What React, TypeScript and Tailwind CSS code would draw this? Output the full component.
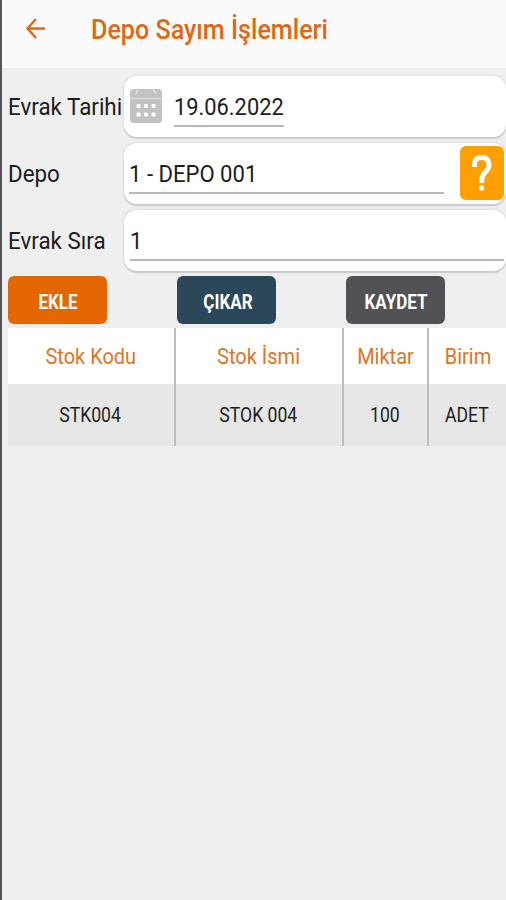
import type { ReactNode } from "react";

const columns = [
  { title: "Stok Kodu", value: "STK004" },
  { title: "Stok İsmi", value: "STOK 004" },
  { title: "Miktar", value: "100" },
  { title: "Birim", value: "ADET" },
];

const actions = [
  { label: "EKLE", color: "bg-[#e36600]" },
  { label: "ÇIKAR", color: "bg-[#2b4759]" },
  { label: "KAYDET", color: "bg-[#515255]" },
];

function Field({ label, children }: { label: string; children: ReactNode }) {
  return (
    <div className="flex h-[61px]">
      <div className="flex w-[116px] shrink-0 items-center">
        <span className="origin-left scale-x-[0.932] text-2xl whitespace-nowrap">{label}</span>
      </div>
      <div className="flex min-w-0 flex-1 rounded-[13px] bg-white shadow-[0_2px_1px_#cbcbcb,0_0_3px_#cdcdcd]">
        {children}
      </div>
    </div>
  );
}

function CalendarIcon() {
  return (
    <svg width="32" height="34" viewBox="0 0 32 34">
      <rect width="32" height="34" rx="4" fill="#c2c2c2" />
      <path d="M0 9.5h32" stroke="#dadada" strokeWidth="1.5" />
      <path d="M7.5 1.5L6.5 4M24 1.5L25.5 4" stroke="#e4e4e4" strokeWidth="1.8" strokeLinecap="round" />
      <g fill="#fff">
        <rect x="6.5" y="15" width="4" height="4" rx="1" />
        <rect x="14" y="15" width="4" height="4" rx="1" />
        <rect x="21.5" y="15" width="4" height="4" rx="1" />
        <rect x="6.5" y="23.5" width="4" height="4" rx="1" />
        <rect x="14" y="23.5" width="4" height="4" rx="1" />
        <rect x="21.5" y="23.5" width="4" height="4" rx="1" />
      </g>
    </svg>
  );
}

export default function App() {
  return (
    <div className="h-[900px] w-[506px] overflow-hidden border-l-2 border-[#565658] bg-[#efefef] font-['Roboto',sans-serif] text-[#1c1c1c]">
      <header className="flex h-[68px] items-start bg-[#fafafa] text-[#dd6916]">
        <button className="mt-[18px] ml-[23px]">
          <svg width="21" height="22" viewBox="0 0 21 22" fill="none" stroke="currentColor" strokeWidth="2.4">
            <path d="M20 10.5H2.5M11 1L2.5 10.5L11 20" />
          </svg>
        </button>
        <h1 className="mt-[10px] ml-[45px] origin-left scale-x-[0.93] text-[27px] leading-10 font-medium whitespace-nowrap">
          Depo Sayım İşlemleri
        </h1>
      </header>

      <main className="pt-2 pl-1.5">
        <div className="flex flex-col gap-1.5">
          <Field label="Evrak Tarihi">
            <div className="mt-[13px] ml-1.5">
              <CalendarIcon />
            </div>
            <div className="mt-[11px] ml-3 h-10 w-[110px] border-b-2 border-[#b9b9b9] text-2xl leading-10">
              <span className="block origin-left scale-x-[0.91]">19.06.2022</span>
            </div>
          </Field>
          <Field label="Depo">
            <div className="mt-[11px] ml-[5px] h-10 w-[315px] border-b-2 border-[#b9b9b9] text-2xl leading-10">
              <span className="block origin-left scale-x-[0.92]">1 - DEPO 001</span>
            </div>
            <button className="mt-[3px] ml-4 flex h-[54px] w-[44px] items-center justify-center rounded-md bg-[#ffa000]">
              <svg width="20" height="36" viewBox="0 0 20 36" fill="none" stroke="#fff">
                <path d="M2.5 12V9Q2.5 2.5 9.5 2.5Q17 2.5 17 9.5Q17 13.5 13.5 17Q9.5 20.5 9.5 28" strokeWidth="5" />
                <circle cx="9.5" cy="33" r="2.7" fill="#fff" stroke="none" />
              </svg>
            </button>
          </Field>
          <Field label="Evrak Sıra">
            <div className="mt-[11px] mr-0.5 ml-1.5 h-10 flex-1 border-b-2 border-[#b9b9b9] text-2xl leading-10">
              <span className="block origin-left scale-x-[0.92]">1</span>
            </div>
          </Field>
        </div>

        <div className="mt-[5px] grid grid-cols-[169px_169px_160px]">
          {actions.map((action) => (
            <button
              key={action.label}
              className={`flex h-12 w-[99px] items-center justify-center rounded-md pt-[3px] pl-0.5 text-xl font-bold text-white ${action.color}`}
            >
              <span className="scale-x-[0.85]">{action.label}</span>
            </button>
          ))}
        </div>

        <div className="mt-1 grid grid-cols-[168px_168px_85px_77px]">
          {columns.map((col) => (
            <div key={col.title} className="border-r-2 border-[#bdbdbd] text-center whitespace-nowrap last:border-r-0">
              <div className="flex h-14 items-center justify-center bg-white pt-[3px] text-[21.5px] text-[#e07424]">
                <span className="scale-x-[0.93]">{col.title}</span>
              </div>
              <div className="flex h-[62px] items-center justify-center bg-[#e7e7e7] pr-0.5 text-xl">
                <span className="scale-x-[0.88]">{col.value}</span>
              </div>
            </div>
          ))}
        </div>
      </main>
    </div>
  );
}
